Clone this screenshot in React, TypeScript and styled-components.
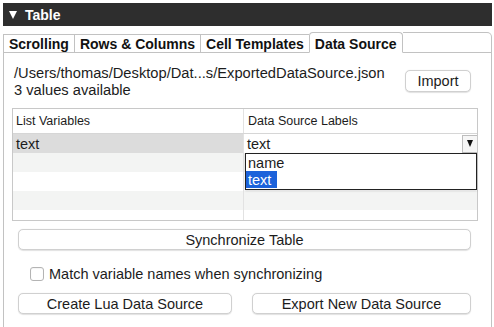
import React from "react";
import styled, { createGlobalStyle, css } from "styled-components";

const GlobalStyle = createGlobalStyle`
  html, body { margin: 0; padding: 0; background: #ffffff; }
  body { font-family: "Liberation Sans", Arial, Helvetica, sans-serif; color: #1c1c1c; }
  * { box-sizing: border-box; }
`;

const Page = styled.div`
  width: 494px;
  height: 327px;
  overflow: hidden;
  padding: 3px 2px 0 3px;
  display: flex;
  flex-direction: column;
`;

const Header = styled.div`
  height: 23px;
  background: #2e2e2e;
  color: #ffffff;
  font-weight: bold;
  font-size: 14px;
  display: flex;
  align-items: center;
  padding-left: 6px;
  gap: 8px;
`;

const Triangle = styled.span`
  width: 0;
  height: 0;
  border-left: 4px solid transparent;
  border-right: 4px solid transparent;
  border-top: 8px solid #ffffff;
`;

const TabStrip = styled.div`
  margin-top: 6px;
  height: 21px;
  display: flex;
  align-items: flex-end;
`;

const Tab = styled.div<{ $active?: boolean }>`
  height: 19px;
  padding: 0 5px;
  font-size: 14px;
  font-weight: bold;
  color: #111;
  background: #ffffff;
  border: 1px solid #c2c2c2;
  border-right: none;
  display: flex;
  align-items: center;
  white-space: nowrap;
  ${(p) =>
    p.$active &&
    css`
      height: 21px;
      border-right: 1px solid #c2c2c2;
      border-bottom-color: transparent;
      border-radius: 4px 4px 0 0;
      padding-top: 2px;
    `}
`;

const TabFiller = styled.div`
  flex: 1;
  height: 21px;
  border: 1px solid #c2c2c2;
  border-left: none;
  border-radius: 0 5px 0 0;
`;

const Panel = styled.div`
  flex: 1;
  border-left: 1px solid #c2c2c2;
  border-right: 1px solid #c2c2c2;
  padding: 12px 13px 0 8px;
  display: flex;
  flex-direction: column;
`;

const InfoRow = styled.div`
  display: flex;
  justify-content: space-between;
  align-items: flex-start;
`;

const InfoText = styled.div`
  padding-left: 2px;
  font-size: 14.7px;
  line-height: 17px;
  white-space: nowrap;
`;

const Button = styled.button`
  height: 21px;
  padding: 0 10px;
  background: #ffffff;
  border: 1px solid #d0d0d0;
  border-radius: 5px;
  box-shadow: 0 0.5px 1px rgba(0, 0, 0, 0.12);
  font-family: "Liberation Sans", Arial, Helvetica, sans-serif;
  font-size: 14.5px;
  color: #1c1c1c;
  display: flex;
  align-items: center;
  justify-content: center;
  white-space: nowrap;
`;

const ImportButton = styled(Button)`
  width: 66px;
  height: 22px;
  margin-top: 5px;
  margin-right: 7px;
`;

const Table = styled.div`
  margin-top: 9px;
  border: 1px solid #c8c8c8;
  display: flex;
  flex-direction: column;
  position: relative;
`;

const HeaderRow = styled.div`
  height: 25px;
  display: grid;
  grid-template-columns: 231px 1fr;
  border-bottom: 1px solid #d6d6d6;
  font-size: 12.5px;
`;

const HeaderCell = styled.div<{ $first?: boolean }>`
  display: flex;
  align-items: center;
  padding-left: ${(p) => (p.$first ? "3px" : "4px")};
  ${(p) => p.$first && "border-right: 1px solid #e2e2e2;"}
`;

const Body = styled.div`
  height: 86px;
  overflow: hidden;
  display: flex;
  flex-direction: column;
`;

const Row = styled.div<{ $stripe?: boolean }>`
  flex: 0 0 19px;
  display: grid;
  grid-template-columns: 231px 1fr;
  background: ${(p) => (p.$stripe ? "#f3f4f3" : "#ffffff")};
  font-size: 14.5px;
`;

const Cell = styled.div<{ $first?: boolean; $selected?: boolean }>`
  display: flex;
  align-items: center;
  padding-left: ${(p) => (p.$first ? "3px" : "4px")};
  ${(p) => p.$first && "border-right: 1px solid #e2e2e2;"}
  ${(p) => p.$selected && "background: #dcdcdc;"}
`;

const Combo = styled.div`
  display: flex;
  align-items: center;
  justify-content: space-between;
  background: #ffffff;
  padding-left: 3px;
`;

const ComboArrow = styled.div`
  width: 15px;
  height: 18px;
  border: 1px solid #bdbdbd;
  border-right: none;
  background: #f6f6f6;
  display: flex;
  align-items: center;
  justify-content: center;
`;

const SmallTriangle = styled.span`
  width: 0;
  height: 0;
  border-left: 3.5px solid transparent;
  border-right: 3.5px solid transparent;
  border-top: 7px solid #111;
`;

const Dropdown = styled.div`
  position: absolute;
  left: 232px;
  right: 0;
  top: 44px;
  height: 37px;
  background: #ffffff;
  border: 1px solid #222;
  box-shadow: 0 1px 2px rgba(0, 0, 0, 0.15);
  display: flex;
  flex-direction: column;
  font-size: 14.5px;
  z-index: 2;
`;

const Option = styled.div<{ $highlighted?: boolean }>`
  height: 17px;
  display: flex;
  align-items: center;
  span {
    padding: 0 6px 0 2px;
    height: 100%;
    display: flex;
    align-items: center;
    ${(p) => p.$highlighted && "background: #1c62da; color: #ffffff;"}
  }
`;

const SyncButton = styled(Button)`
  margin: 8px 7px 0 6px;
  height: 21px;
`;

const CheckRow = styled.label`
  margin: 16px 0 0 18px;
  display: flex;
  align-items: center;
  gap: 5px;
  font-size: 14.5px;
  height: 16px;
`;

const CheckBox = styled.span`
  width: 14px;
  height: 14px;
  border: 1px solid #b4b4b4;
  border-radius: 3px;
  background: #ffffff;
  box-shadow: inset 0 0.5px 1px rgba(0, 0, 0, 0.08);
`;

const ButtonRow = styled.div`
  margin: 11px 7px 0 6px;
  display: grid;
  grid-template-columns: 214px 1fr;
  gap: 20px;
`;

export default function App() {
  const rows = [
    { left: "text", stripe: false, selected: true },
    { left: "", stripe: true },
    { left: "", stripe: false },
    { left: "", stripe: true },
    { left: "", stripe: false },
  ];
  return (
    <>
      <GlobalStyle />
      <Page>
        <Header>
          <Triangle />
          <span>Table</span>
        </Header>
        <TabStrip>
          <Tab>Scrolling</Tab>
          <Tab>Rows &amp; Columns</Tab>
          <Tab>Cell Templates</Tab>
          <Tab $active>Data Source</Tab>
          <TabFiller />
        </TabStrip>
        <Panel>
          <InfoRow>
            <InfoText>
              /Users/thomas/Desktop/Dat...s/ExportedDataSource.json
              <br />3 values available
            </InfoText>
            <ImportButton>Import</ImportButton>
          </InfoRow>
          <Table>
            <HeaderRow>
              <HeaderCell $first>List Variables</HeaderCell>
              <HeaderCell>Data Source Labels</HeaderCell>
            </HeaderRow>
            <Body>
              {rows.map((r, i) => (
                <Row key={i} $stripe={r.stripe}>
                  <Cell $first $selected={r.selected}>
                    {r.left}
                  </Cell>
                  {i === 0 ? (
                    <Combo>
                      <span>text</span>
                      <ComboArrow>
                        <SmallTriangle />
                      </ComboArrow>
                    </Combo>
                  ) : (
                    <Cell />
                  )}
                </Row>
              ))}
            </Body>
            <Dropdown>
              <Option>
                <span>name</span>
              </Option>
              <Option $highlighted>
                <span>text</span>
              </Option>
            </Dropdown>
          </Table>
          <SyncButton>Synchronize Table</SyncButton>
          <CheckRow>
            <CheckBox />
            <span>Match variable names when synchronizing</span>
          </CheckRow>
          <ButtonRow>
            <Button>Create Lua Data Source</Button>
            <Button>Export New Data Source</Button>
          </ButtonRow>
        </Panel>
      </Page>
    </>
  );
}
